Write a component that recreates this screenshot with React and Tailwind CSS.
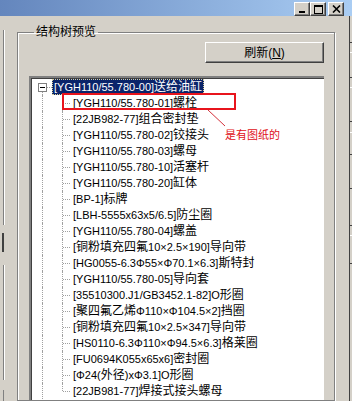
import React from 'react';

const children = [
    '[YGH110/55.780-01]螺栓',
    '[22JB982-77]组合密封垫',
    '[YGH110/55.780-02]铰接头',
    '[YGH110/55.780-03]螺母',
    '[YGH110/55.780-10]活塞杆',
    '[YGH110/55.780-20]缸体',
    '[BP-1]标牌',
    '[LBH-5555x63x5/6.5]防尘圈',
    '[YGH110/55.780-04]螺盖',
    '[铜粉填充四氟10×2.5×190]导向带',
    '[HG0055-6.3Φ55×Φ70.1×6.3]斯特封',
    '[YGH110/55.780-05]导向套',
    '[35510300.J1/GB3452.1-82]O形圈',
    '[聚四氟乙烯Φ110×Φ104.5×2]挡圈',
    '[铜粉填充四氟10×2.5×347]导向带',
    '[HS0110-6.3Φ110×Φ94.5×6.3]格莱圈',
    '[FU0694K055x65x6]密封圈',
    '[Φ24(外径)xΦ3.1]O形圈',
    '[22JB981-77]焊接式接头螺母',
];

// CJK glyphs sit a pixel wider than the latin text in the original
const Label = ({ text }) =>
    text.split(/([\u3400-\u9fff]+)/).map((part, i) =>
        /[\u3400-\u9fff]/.test(part)
            ? <span key={i} className="text-[12px]">{part}</span>
            : <React.Fragment key={i}>{part}</React.Fragment>
    );

const Expander = ({ open }) => (
    <div className="relative w-[9px] h-[9px] border border-[#808080] bg-white flex items-center justify-center">
        <div className="w-[5px] h-px bg-black" />
        {!open && <div className="absolute w-px h-[5px] bg-black" />}
    </div>
);

const RootRow = ({ text, selected, open, last }) => (
    <div className="flex h-[16px] items-stretch">
        <div className="relative w-[21px] flex items-center">
            {!last && <div className="absolute left-[11px] top-[12px] bottom-0 border-l border-dotted border-[#a0a0a0]" />}
            <div className="ml-[7px]"><Expander open={open} /></div>
            <div className="w-[5px] border-t border-dotted border-[#a0a0a0]" />
        </div>
        <div className={`flex items-center px-[1px] whitespace-nowrap leading-none ${selected ? 'bg-[#0a246a] text-white border border-dotted border-[#d8cf9c]' : 'border border-transparent'}`}>
            <Label text={text} />
        </div>
    </div>
);

const ChildRow = ({ text, last }) => (
    <div className="flex h-[16px] items-stretch">
        <div className="relative w-[21px]">
            <div className="absolute left-[11px] top-0 bottom-0 border-l border-dotted border-[#a0a0a0]" />
        </div>
        <div className="relative w-[19px]">
            <div className={`absolute left-[10px] top-0 border-l border-dotted border-[#a0a0a0] ${last ? 'h-[8px]' : 'bottom-0'}`} />
            <div className="absolute left-[11px] top-[8px] w-[7px] border-t border-dotted border-[#a0a0a0]" />
        </div>
        <div className="flex items-center px-[1px] border border-transparent whitespace-nowrap leading-none">
            <Label text={text} />
        </div>
    </div>
);

const CaptionButton = ({ children }) => (
    <div className="w-[16px] h-[14px] bg-[#d4d0c8] border-t border-l border-white border-r border-b border-r-[#404040] border-b-[#404040] shadow-[inset_-1px_-1px_0_#808080] flex items-center justify-center">
        {children}
    </div>
);

export default function App() {
    return (
        <div className="w-[352px] h-[401px] overflow-hidden bg-[#d4d0c8] flex flex-col text-[11px] text-black font-['Liberation_Sans','Noto_Sans_CJK_SC',sans-serif]">
            {/* title bar */}
            <div className="h-[16px] shrink-0 bg-gradient-to-r from-[#6486bd] to-[#aacdf3] flex items-start justify-end pt-[2px] pr-[8px]">
                <div className="flex">
                    <CaptionButton>
                        <svg width="8" height="8" viewBox="0 0 8 8"><rect x="1" y="6" width="6" height="2" fill="#000" /></svg>
                    </CaptionButton>
                    <CaptionButton>
                        <svg width="9" height="9" viewBox="0 0 9 9"><rect x="0.5" y="0.5" width="8" height="8" fill="none" stroke="#000" /><rect x="0" y="0" width="9" height="2" fill="#000" /></svg>
                    </CaptionButton>
                    <div className="w-[2px]" />
                    <CaptionButton>
                        <svg width="9" height="8" viewBox="0 0 9 8"><path d="M1 0.5 L8 7.5 M8 0.5 L1 7.5" stroke="#000" strokeWidth="1.6" /></svg>
                    </CaptionButton>
                </div>
            </div>

            <div className="flex flex-1 min-h-0">
                {/* left edge of neighbouring panels */}
                <div className="w-[4px] shrink-0 flex flex-col">
                    <div className="mt-[14px] h-[195px] border-r border-[#808080] shadow-[1px_0_0_#fff]" />
                    <div className="mt-[8px] h-[19px] border-r-2 border-[#404040]" />
                    <div className="mt-[13px] h-[115px] border-r border-[#808080] shadow-[1px_0_0_#fff]" />
                    <div className="mt-[10px] flex-1 border-r border-[#808080]" />
                </div>

                {/* group box */}
                <fieldset className="ml-[13px] mt-[9px] w-[318px] shrink-0 border border-[#808080] shadow-[inset_1px_1px_0_#fff,1px_1px_0_#fff] pl-[11px] pr-[10px] flex flex-col">
                    <legend className="ml-[5px] px-[2px] text-[12px] leading-[14px]">结构树预览</legend>
                    <div className="flex justify-end mt-[3px]">
                        <button className="w-[119px] h-[21px] bg-[#d4d0c8] border-t border-l border-white border-r border-b border-r-[#404040] border-b-[#404040] shadow-[inset_-1px_-1px_0_#808080] text-[12px] leading-none">
                            刷新(<span className="underline">N</span>)
                        </button>
                    </div>

                    <div className="relative mt-[13px] h-[340px] bg-white border-t-2 border-l-2 border-t-[#808080] border-l-[#808080] shadow-[inset_1px_1px_0_#404040] overflow-hidden">
                        <div className="pt-[1px] flex flex-col">
                            <RootRow text="[YGH110/55.780-00]送给油缸" selected open />
                            {children.map((c, i) => (
                                <ChildRow key={i} text={c} last={i === children.length - 1} />
                            ))}
                            <RootRow text="[YGH110/55.780-06]螺栓" open={false} last />
                        </div>

                        {/* annotation */}
                        <div className="absolute left-[31px] top-[15px] w-[174px] h-[17px] border-2 border-[#e8141c]" />
                        <svg className="absolute left-0 top-0" width="292" height="80">
                            <line x1="177" y1="32" x2="194" y2="48" stroke="#d4303a" strokeWidth="1" />
                        </svg>
                        <div className="absolute left-[194px] top-[49px] text-[11px] leading-[14px] text-[#e01020] font-['Noto_Sans_CJK_SC',sans-serif]">是有图纸的</div>
                    </div>
                </fieldset>

                {/* right neighbour */}
                <div className="flex-1 flex justify-end">
                    <div className="w-[3px] border-l border-[#404040] flex flex-col">
                        <div className="h-[27px] border-b border-[#404040]" />
                        <div className="h-[10px] border-b border-white" />
                        <div className="h-[25px] border-b border-[#404040]" />
                        <div className="h-[10px] border-b border-white" />
                        <div className="h-[34px] border-b border-[#404040]" />
                        <div className="h-[11px] border-b border-white" />
                        <div className="h-[22px] border-b border-[#404040]" />
                        <div className="h-[34px] border-b border-[#404040]" />
                        <div className="h-[37px] border-b border-[#404040]" />
                        <div className="h-[10px] border-b border-white" />
                        <div className="h-[28px] border-b border-[#404040]" />
                    </div>
                </div>
            </div>
        </div>
    );
}
